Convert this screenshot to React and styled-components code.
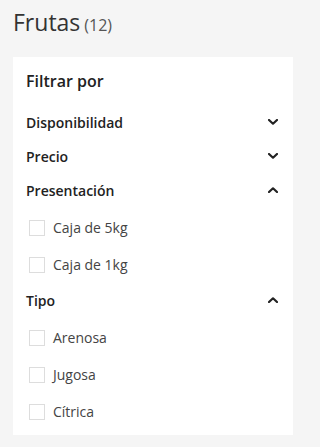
import React, { useState } from 'react';
import styled, { createGlobalStyle } from 'styled-components';

const GlobalStyle = createGlobalStyle`
  body {
    margin: 0;
    background: #f5f5f5;
    font-family: "Open Sans", "Liberation Sans", sans-serif;
  }
`;

const Page = styled.div`
  box-sizing: border-box;
  width: 305px;
  padding: 7px 12px 0 13px;
`;

const Title = styled.h1`
  margin: 0;
  font-size: 23px;
  line-height: 30px;
  font-weight: 400;
  color: #333333;
`;

const Count = styled.span`
  margin-left: 4px;
  font-size: 16px;
  color: #555555;
`;

const Card = styled.div`
  margin-top: 17px;
  background: #ffffff;
  padding: 12px 15px 5px 13px;
`;

const CardTitle = styled.div`
  font-size: 16px;
  line-height: 24px;
  font-weight: 600;
  color: #222222;
  margin-bottom: 12px;
`;

const SectionHeader = styled.div`
  display: flex;
  align-items: center;
  justify-content: space-between;
  height: 34px;
  font-size: 14px;
  font-weight: 600;
  color: #222222;
  cursor: pointer;
`;

const OptionList = styled.div`
  padding-top: 2px;
`;

const Option = styled.label`
  display: flex;
  align-items: center;
  gap: 8px;
  height: 37px;
  padding-left: 3px;
  font-size: 14px;
  color: #444444;
`;

const Box = styled.span`
  width: 14px;
  height: 14px;
  border: 1px solid #dddddd;
  background: #ffffff;
  flex-shrink: 0;
`;

const Chevron = ({ open }) => (
  <svg width="10" height="6" viewBox="0 0 10 6" fill="none">
    <polyline
      points={open ? '1,5 5,1.3 9,5' : '1,1 5,4.7 9,1'}
      stroke="#222"
      strokeWidth="2.2"
      strokeLinecap="round"
      strokeLinejoin="round"
    />
  </svg>
);

const sections = [
  { name: 'Disponibilidad', open: false, options: [] },
  { name: 'Precio', open: false, options: [] },
  { name: 'Presentación', open: true, options: ['Caja de 5kg', 'Caja de 1kg'] },
  { name: 'Tipo', open: true, options: ['Arenosa', 'Jugosa', 'Cítrica'] },
];

function Section({ section }) {
  const [open, setOpen] = useState(section.open);
  return (
    <>
      <SectionHeader onClick={() => setOpen(!open)}>
        {section.name}
        <Chevron open={open} />
      </SectionHeader>
      {open && section.options.length > 0 && (
        <OptionList>
          {section.options.map((opt) => (
            <Option key={opt}>
              <Box />
              {opt}
            </Option>
          ))}
        </OptionList>
      )}
    </>
  );
}

export default function App() {
  return (
    <>
      <GlobalStyle />
      <Page>
        <Title>
          Frutas
          <Count>(12)</Count>
        </Title>
        <Card>
          <CardTitle>Filtrar por</CardTitle>
          {sections.map((s) => (
            <Section key={s.name} section={s} />
          ))}
        </Card>
      </Page>
    </>
  );
}
